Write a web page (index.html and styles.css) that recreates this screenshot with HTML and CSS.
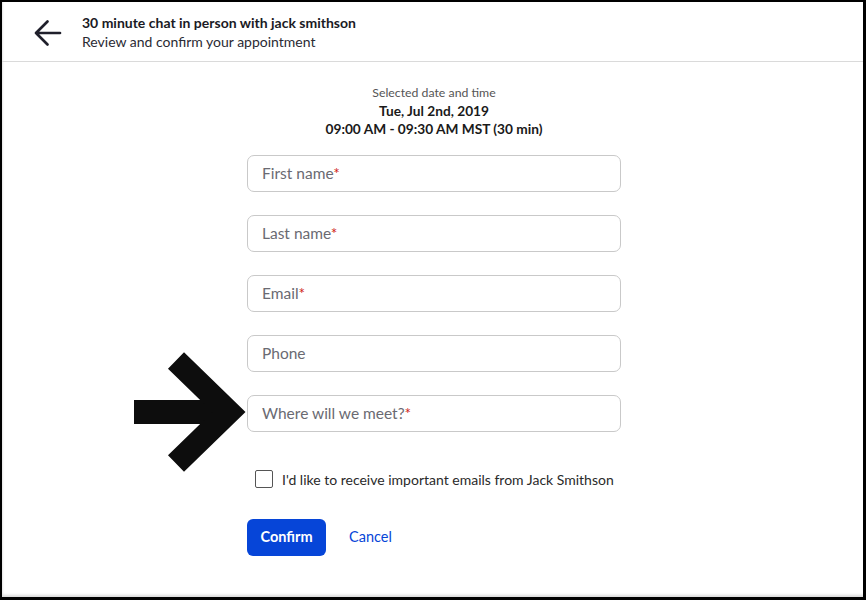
FILE: index.html
```html
<!DOCTYPE html>
<html>
<head>
<meta charset="utf-8">
<link rel="stylesheet" href="styles.css">
</head>
<body>
<div class="frame">
  <div class="panel">
    <header class="header">
      <svg class="back" width="30" height="30" viewBox="0 0 30 30">
        <path d="M27 14 H3 M14.5 2.5 L3 14 L14.5 25.5" fill="none" stroke="#1f1f2b" stroke-width="2.7" stroke-linecap="round" stroke-linejoin="round"/>
      </svg>
      <div class="titles">
        <div class="title">30 minute chat in person with jack smithson</div>
        <div class="subtitle">Review and confirm your appointment</div>
      </div>
    </header>
    <main class="content">
      <div class="when">
        <div class="when-label">Selected date and time</div>
        <div class="when-strong">Tue, Jul 2nd, 2019</div>
        <div class="when-strong">09:00 AM - 09:30 AM MST (30 min)</div>
      </div>
      <form class="form">
        <div class="field"><span class="ph">First name<span class="req">*</span></span></div>
        <div class="field"><span class="ph">Last name<span class="req">*</span></span></div>
        <div class="field"><span class="ph">Email<span class="req">*</span></span></div>
        <div class="field"><span class="ph">Phone</span></div>
        <div class="field"><span class="ph">Where will we meet?<span class="req">*</span></span></div>
        <label class="check-row"><span class="box"></span><span class="check-label">I'd like to receive important emails from Jack Smithson</span></label>
        <div class="actions">
          <button type="button" class="confirm">Confirm</button>
          <a class="cancel">Cancel</a>
        </div>
      </form>
      <svg class="pointer" width="130" height="130" viewBox="0 0 130 130">
        <path d="M2 62 H95" fill="none" stroke="#0d0d0d" stroke-width="24" stroke-linejoin="round"/>
        <path d="M44 10.5 L97 62 L44 113.5" fill="none" stroke="#0d0d0d" stroke-width="23" stroke-linejoin="miter" stroke-miterlimit="4"/>
      </svg>
    </main>
  </div>
</div>
</body>
</html>
```

FILE: styles.css
```css
* { box-sizing: border-box; }
html, body { margin: 0; padding: 0; }
body {
  width: 866px;
  height: 600px;
  background: #000;
  font-family: "Lato", "Liberation Sans", sans-serif;
  overflow: hidden;
}
.frame {
  padding: 2px 3px 3px 2px;
  height: 600px;
}
.panel {
  background: #fff;
  height: 595px;
  box-shadow: inset 0 -4px 3px -2px #d9d9d9, inset 2px 0 2px -1px #e6e6e6;
  display: flex;
  flex-direction: column;
}
.header {
  height: 60px;
  border-bottom: 1px solid #dadada;
  display: flex;
  align-items: center;
  padding-left: 31px;
}
.back { margin-right: 19px; margin-top: 4px; }
.titles { display: flex; flex-direction: column; }
.title {
  font-weight: 700;
  font-size: 14px;
  line-height: 19px;
  color: #1a1a24;
}
.subtitle {
  font-size: 14px;
  line-height: 19px;
  color: #2a2a33;
}
.content {
  position: relative;
  flex: 1;
  display: flex;
  flex-direction: column;
  align-items: center;
  padding-top: 23px;
  padding-left: 3px;
}
.when {
  text-align: center;
  margin-bottom: 17px;
}
.when-label {
  font-size: 12.3px;
  line-height: 16px;
  color: #555;
  margin-bottom: 1px;
}
.when-strong {
  font-weight: 700;
  font-size: 13.7px;
  line-height: 18px;
  color: #1a1a1a;
}
.form {
  width: 374px;
  display: flex;
  flex-direction: column;
}
.field {
  height: 37px;
  border: 1px solid #c9c9c9;
  border-radius: 7px;
  margin-bottom: 23px;
  display: flex;
  align-items: center;
  padding-left: 14px;
  padding-bottom: 2px;
}
.field:nth-of-type(5) { margin-bottom: 37px; }
.ph {
  font-size: 15.5px;
  color: #6a6a72;
}
.req { color: #d0261b; }
.check-row {
  display: flex;
  align-items: center;
  padding-left: 8px;
  height: 20px;
  margin-bottom: 30px;
}
.box {
  width: 18px;
  height: 18px;
  border: 1px solid #555;
  border-radius: 2px;
  margin-right: 9px;
}
.check-label {
  font-size: 14px;
  color: #2a2a2a;
}
.actions {
  display: flex;
  align-items: center;
}
.confirm {
  width: 79px;
  height: 37px;
  background: #0645d8;
  color: #fff;
  border: none;
  border-radius: 6px;
  font-family: inherit;
  font-weight: 700;
  font-size: 14.5px;
  margin-right: 23px;
  padding: 0 0 2px;
}
.cancel {
  color: #0645d8;
  font-size: 14.5px;
  padding-bottom: 2px;
}
.pointer {
  position: absolute;
  left: 130px;
  top: 288px;
}
```
